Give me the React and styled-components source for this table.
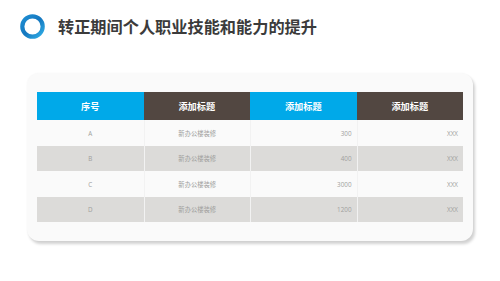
import React from 'react'
import styled, { createGlobalStyle } from 'styled-components'

const GlobalStyle = createGlobalStyle`
    html, body {
        margin: 0;
        padding: 0;
        background: #ffffff;
    }
    body {
        font-family: "Noto Sans CJK SC", "Noto Sans", sans-serif;
    }
`

const Page = styled.div`
    width: 500px;
    height: 281px;
    box-sizing: border-box;
    padding: 14px 0 0 20px;
    overflow: hidden;
`

const Header = styled.div`
    display: flex;
    align-items: center;
    gap: 13px;
    height: 25px;
`

const Title = styled.h1`
    margin: 0;
    font-size: 16.2px;
    font-weight: 700;
    color: #3b3b3b;
    line-height: 25px;
`

const Card = styled.div`
    margin: 34px 0 0 7px;
    width: 446px;
    height: 168px;
    box-sizing: border-box;
    padding: 19px 10px 0 10px;
    background: #fafafa;
    border-radius: 12px;
    box-shadow: 2px 3px 3px rgba(0, 0, 0, 0.18), 0 0 2px rgba(0, 0, 0, 0.04);
`

const Table = styled.div`
    display: grid;
    grid-template-columns: repeat(4, 1fr);
    width: 426px;
`

const HeadCell = styled.div`
    height: 28px;
    display: flex;
    align-items: center;
    justify-content: center;
    background: ${p => p.$dark ? '#524741' : '#00a9e9'};
    color: #ffffff;
    font-size: 9.2px;
    font-weight: 700;
`

const Cell = styled.div`
    height: ${p => p.$h}px;
    display: flex;
    align-items: center;
    justify-content: ${p => p.$right ? 'flex-end' : 'center'};
    padding-right: ${p => p.$right ? '5px' : '0'};
    background: ${p => p.$alt ? '#dcdbd9' : '#fafafa'};
    border-left: ${p => p.$first ? 'none' : '1px solid #f2f2f2'};
    color: #a09f9d;
    font-size: 6.3px;
    font-family: "Open Sans", "Noto Sans CJK SC", sans-serif;
`

const rows = [
    ['A', '新办公楼装修', '300', 'XXX'],
    ['B', '新办公楼装修', '400', 'XXX'],
    ['C', '新办公楼装修', '3000', 'XXX'],
    ['D', '新办公楼装修', '1200', 'XXX'],
]

const heights = [26, 25, 26, 25]

function Ring() {
    return (
        <svg width="25" height="25" viewBox="0 0 25 25">
            <defs>
                <linearGradient id="ring" x1="0" y1="0" x2="1" y2="1">
                    <stop offset="0" stopColor="#1f8fd3" />
                    <stop offset="0.5" stopColor="#1477bf" />
                    <stop offset="1" stopColor="#31aee6" />
                </linearGradient>
            </defs>
            <circle cx="12.5" cy="12.5" r="10.2" fill="none" stroke="url(#ring)" strokeWidth="4.2" />
        </svg>
    )
}

export default function App() {
    return (
        <Page>
            <GlobalStyle />
            <Header>
                <Ring />
                <Title>转正期间个人职业技能和能力的提升</Title>
            </Header>
            <Card>
                <Table>
                    <HeadCell>序号</HeadCell>
                    <HeadCell $dark>添加标题</HeadCell>
                    <HeadCell>添加标题</HeadCell>
                    <HeadCell $dark>添加标题</HeadCell>
                    {rows.map((r, i) => r.map((v, j) => (
                        <Cell
                            key={i + '-' + j}
                            $h={heights[i]}
                            $alt={i % 2 === 1}
                            $first={j === 0}
                            $right={j >= 2}
                        >
                            {v}
                        </Cell>
                    )))}
                </Table>
            </Card>
        </Page>
    )
}
